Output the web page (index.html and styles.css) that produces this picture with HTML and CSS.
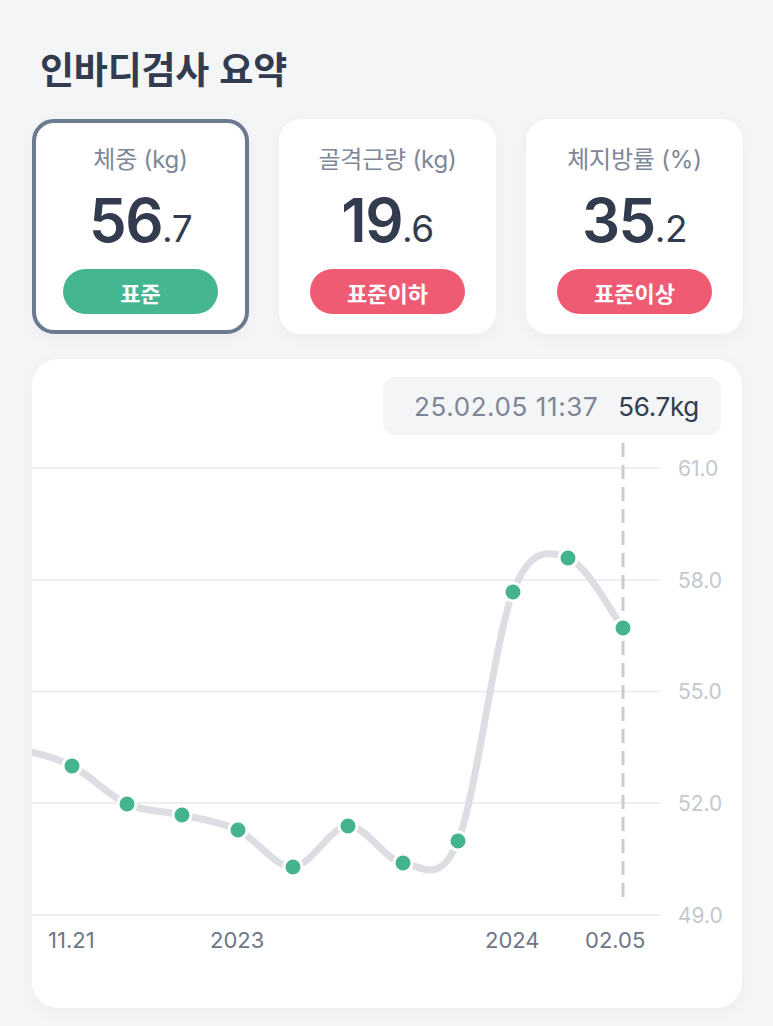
FILE: index.html
```html
<!DOCTYPE html>
<html lang="ko">
<head>
<meta charset="utf-8">
<title>인바디검사 요약</title>
<link rel="stylesheet" href="styles.css">
</head>
<body>
  <main class="page">
    <h1 class="title">인바디검사 요약</h1>

    <section class="stats">
      <div class="stat stat--active">
        <div class="stat-label">체중 (kg)</div>
        <div class="stat-value"><span class="int">56</span><span class="dec">.7</span></div>
        <div class="pill pill--green">표준</div>
      </div>
      <div class="stat">
        <div class="stat-label">골격근량 (kg)</div>
        <div class="stat-value"><span class="int">19</span><span class="dec">.6</span></div>
        <div class="pill pill--red">표준이하</div>
      </div>
      <div class="stat">
        <div class="stat-label">체지방률 (%)</div>
        <div class="stat-value"><span class="int">35</span><span class="dec">.2</span></div>
        <div class="pill pill--red">표준이상</div>
      </div>
    </section>

    <section class="chart-card">
      <div class="tooltip-row">
        <div class="tooltip">
          <span class="tip-date">25.02.05 11:37</span>
          <span class="tip-value">56.7kg</span>
        </div>
      </div>
      <svg class="chart" width="710" height="520" viewBox="32 443 710 520" xmlns="http://www.w3.org/2000/svg">
        <g class="grid">
          <line x1="32" y1="468" x2="660" y2="468"/>
          <line x1="32" y1="580" x2="660" y2="580"/>
          <line x1="32" y1="691.5" x2="660" y2="691.5"/>
          <line x1="32" y1="803" x2="660" y2="803"/>
          <line x1="32" y1="915" x2="660" y2="915"/>
        </g>
        <g class="ylabels">
          <text x="678" y="476">61.0</text>
          <text x="678" y="588">58.0</text>
          <text x="678" y="699">55.0</text>
          <text x="678" y="811">52.0</text>
          <text x="678" y="923">49.0</text>
        </g>
        <line class="cursor" x1="623" y1="443" x2="623" y2="905"/>
        <path class="curve" d="M17,749 C35.3,752.5 53.7,756.8 72,766 C90.3,775.2 108.7,795.8 127,804 C145.3,812.2 163.5,810.7 182,815 C200.5,819.3 219.5,821.3 238,830 C256.5,838.7 274.7,867.7 293,867 C311.3,866.3 329.7,826.7 348,826 C366.3,825.3 384.7,860.5 403,863 C421.3,865.5 439.7,886.2 458,841 C476.3,795.8 494.7,639.2 513,592 C531.3,544.8 549.7,552 568,558 C586.3,564 613.8,616.3 623,628"/>
        <g class="dots">
          <circle cx="72" cy="766" r="9"/>
          <circle cx="127" cy="804" r="9"/>
          <circle cx="182" cy="815" r="9"/>
          <circle cx="238" cy="830" r="9"/>
          <circle cx="293" cy="867" r="9"/>
          <circle cx="348" cy="826" r="9"/>
          <circle cx="403" cy="863" r="9"/>
          <circle cx="458" cy="841" r="9"/>
          <circle cx="513" cy="592" r="9"/>
          <circle cx="568" cy="558" r="9"/>
          <circle cx="623" cy="628" r="9"/>
        </g>
        <g class="xlabels">
          <text x="48" y="948">11.21</text>
          <text x="210" y="948">2023</text>
          <text x="485" y="948">2024</text>
          <text x="585" y="948">02.05</text>
        </g>
      </svg>
    </section>
  </main>
</body>
</html>
```

FILE: styles.css
```css
* { box-sizing: border-box; }

html, body {
  margin: 0;
  padding: 0;
  background: #f4f5f7;
}

body {
  font-family: Inter, "Noto Sans CJK KR", sans-serif;
  color: #333c4e;
  width: 773px;
  height: 1026px;
  overflow: hidden;
}

.page {
  padding: 48px 29px 0 32px;
}

.title {
  margin: 0 0 31px 8px;
  font-family: "Noto Sans CJK KR", sans-serif;
  font-size: 37px;
  line-height: 40px;
  font-weight: 700;
  color: #333c4e;
  letter-spacing: -0.2px;
}

.stats {
  display: flex;
  gap: 30px;
}

.stat {
  flex: 0 0 217px;
  height: 215px;
  background: #ffffff;
  border: 4px solid transparent;
  border-radius: 22px;
  padding: 22px 0 0;
  display: flex;
  flex-direction: column;
  align-items: center;
  box-shadow: 0 4px 18px rgba(30, 40, 60, 0.04);
}

.stat--active {
  border-color: #6c7a8f;
}

.stat-label {
  font-size: 24px;
  line-height: 30px;
  color: #7e8798;
  font-weight: 400;
  letter-spacing: -0.2px;
}

.stat-value {
  margin-top: 13px;
  height: 64px;
  line-height: 64px;
  color: #333c4e;
  white-space: nowrap;
}

.stat-value .int {
  font-size: 60px;
  font-weight: 600;
  letter-spacing: -1.5px;
}

.stat-value .dec {
  font-size: 37px;
  font-weight: 400;
  letter-spacing: -0.5px;
}

.pill {
  margin-top: 17px;
  width: 155px;
  height: 45px;
  border-radius: 23px;
  display: flex;
  align-items: center;
  justify-content: center;
  font-family: "Noto Sans CJK KR", sans-serif;
  font-size: 22px;
  font-weight: 700;
  color: #ffffff;
}

.pill--green { background: #45b692; }
.pill--red { background: #ef5b73; }

.chart-card {
  margin-top: 25px;
  width: 710px;
  height: 649px;
  background: #ffffff;
  border-radius: 26px;
  padding-top: 18px;
  box-shadow: 0 4px 18px rgba(30, 40, 60, 0.04);
  overflow: hidden;
}

.tooltip-row {
  display: flex;
  justify-content: flex-end;
  padding-right: 21px;
  margin-bottom: 8px;
}

.tooltip {
  height: 58px;
  width: 338px;
  background: #f4f5f7;
  border-radius: 12px;
  display: flex;
  align-items: center;
  justify-content: flex-end;
  gap: 20px;
  padding: 0 22px 0 0;
  font-size: 26px;
}

.tip-date {
  color: #7d8696;
  font-weight: 400;
  letter-spacing: 0.6px;
}

.tip-value {
  color: #333c4e;
  font-weight: 400;
  letter-spacing: -0.3px;
}

.chart {
  display: block;
}

.grid line {
  stroke: #eceef1;
  stroke-width: 2;
}

.ylabels text {
  font-family: Inter, sans-serif;
  font-size: 21px;
  fill: #c4c8ce;
}

.xlabels text {
  font-family: Inter, sans-serif;
  font-size: 22px;
  fill: #6e7687;
}

.cursor {
  stroke: #c9ccd2;
  stroke-width: 3;
  stroke-dasharray: 14 8;
}

.curve {
  fill: none;
  stroke: #dcdee3;
  stroke-width: 7;
  stroke-linecap: round;
  stroke-linejoin: round;
}

.dots circle {
  fill: #43b48d;
  stroke: #ffffff;
  stroke-width: 3;
}
```
